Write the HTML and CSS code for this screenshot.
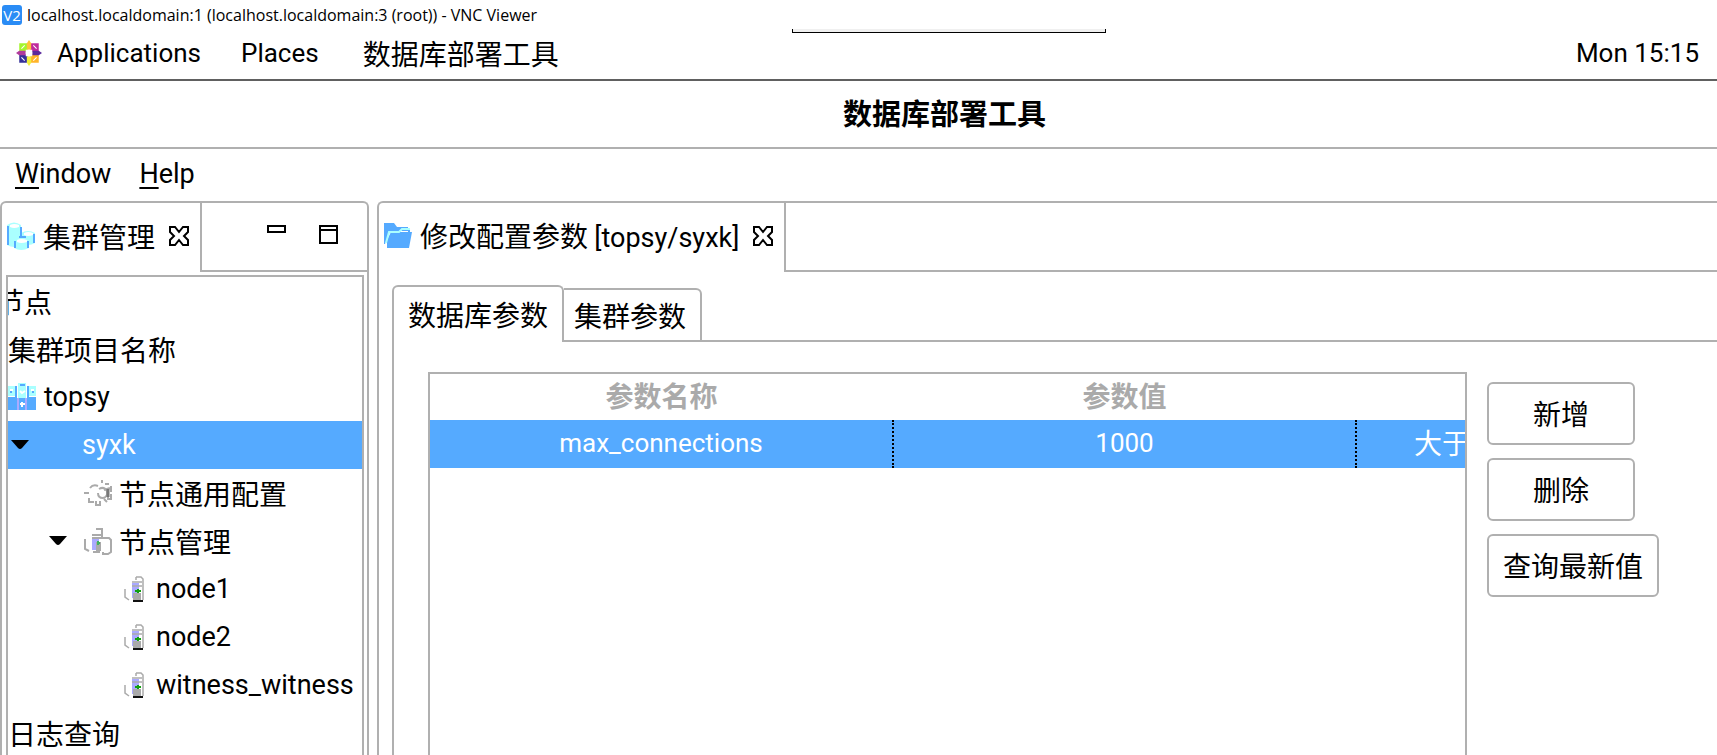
FILE: index.html
```
<!DOCTYPE html>
<html lang="zh-CN">
<head>
  <meta charset="UTF-8">
  <meta name="viewport" content="width=device-width, initial-scale=1.0">
  <title>数据库部署工具</title>
  <link rel="stylesheet" href="styles.css">
</head>
<body>

  <!-- shared icons -->
  <svg class="defs" width="0" height="0">
    <symbol id="close" viewBox="0 0 20 20">
      <path d="M1 1H6L10 6L14 1H19V6L15 10L19 14V19H14L10 14L6 19H1V14L5 10L1 6Z" fill="none" stroke="#000" stroke-width="2"/>
    </symbol>
    <symbol id="arrow" viewBox="0 0 18 10">
      <path d="M0 0H18L11 8Q9 10 7 8Z"/>
    </symbol>
    <symbol id="node" viewBox="0 0 20 26">
      <path d="M8 7H15V22H8Z" fill="#aaaaff"/>
      <path d="M9 17H17V24H9Z" fill="#aaa"/>
      <path d="M12 1H17L19 3V24M1 13V21L5 24M12 1V4M8 6H18M8 10H18" fill="none" stroke="#aaa" stroke-width="1.5"/>
      <path d="M9 25H19" stroke="#111" stroke-width="2"/>
      <path d="M14 13V17M11 15H17" stroke="#10a010" stroke-width="2"/>
    </symbol>
  </svg>

  <header class="vnc-title">
    <span class="vnc-logo">V2</span>
    <span>localhost.localdomain:1 (localhost.localdomain:3 (root)) - VNC Viewer</span>
  </header>
  <div class="vnc-handle"></div>

  <nav class="desktop-bar">
    <svg class="centos" viewBox="0 0 24 24">
      <path d="M3 3H11V11H3Z" fill="#a5f52c"/>
      <path d="M13 3H21V11H13Z" fill="#c02a9c"/>
      <path d="M3 13H11V21H3Z" fill="#35309a"/>
      <path d="M13 13H21V21H13Z" fill="#ffb429"/>
      <path d="M12 0L14 3V9H10V3Z" fill="#ffc13a"/>
      <path d="M24 12L21 14H15V10H21Z" fill="#5b2a9c"/>
      <path d="M12 24L10 21V15H14V21Z" fill="#f0f03c"/>
      <path d="M0 12L3 10H9V14H3Z" fill="#b03a9c"/>
      <path d="M9 9H15V15H9Z" fill="#fff"/>
      <path d="M5 8L8 5M16 5L19 8M5 16L8 19M16 19L19 16" stroke="#fff" stroke-width="1"/>
    </svg>
    <button class="desk-item apps latin">Applications</button>
    <button class="desk-item latin">Places</button>
    <button class="desk-item">数据库部署工具</button>
    <time class="clock latin">Mon 15:15</time>
  </nav>

  <h1 class="window-title">数据库部署工具</h1>

  <nav class="menu-bar latin">
    <button><u>W</u>indow</button>
    <button><u>H</u>elp</button>
  </nav>

  <main class="workbench">
    <section class="pane side">
      <div class="strip">
        <div class="view-tab">
          <svg class="icon" viewBox="0 0 28 28">
            <path d="M0 3Q7 -2 14 3V23Q7 27 0 23Z" fill="#aaffff"/>
            <path d="M14 11Q21 7 28 11V21Q21 25 14 21Z" fill="#aaffff"/>
            <path d="M7 18Q14 14 22 18V26Q14 30 7 26Z" fill="#aaffff"/>
            <path d="M1 4V23M14 5V15M27 12V21M8 19V26M21 19V26M12 15H19" stroke="#55aaff" stroke-width="2" fill="none"/>
            <path d="M3 3Q7 1 12 3V5Q7 7 3 5ZM17 11Q21 9 26 11V13Q21 15 17 13ZM10 18Q14 16 20 18V20Q14 22 10 20Z" fill="#fff"/>
          </svg>
          <span>集群管理</span>
          <button class="x" aria-label="Close"><svg><use href="#close"/></svg></button>
        </div>
        <div class="strip-rest">
          <button class="x" aria-label="Minimize"><svg viewBox="0 0 20 20"><path d="M1 1H18V7H1Z" fill="none" stroke="#000" stroke-width="2"/></svg></button>
          <button class="x" aria-label="Maximize"><svg viewBox="0 0 20 20"><path d="M1 1H18V18H1ZM1 5H18" fill="none" stroke="#000" stroke-width="2"/></svg></button>
        </div>
      </div>
      <ul class="tree">
        <li class="clipped">节点</li>
        <li>集群项目名称</li>
        <li class="latin">
          <svg class="icon" viewBox="0 0 28 28">
            <path d="M0 3H9V13H0ZM19 3H28V13H19ZM10 0H18V15H10Z" fill="#aaffff"/>
            <path d="M0 14H9V27H0ZM10 15H18V27H10ZM19 14H28V27H19ZM7 3H9V14H7ZM19 3H21V14H19Z" fill="#55aaff"/>
            <path d="M10 15V27M18 15V27" stroke="#aaaaff" stroke-width="2"/>
            <path d="M2 7H5M23 7H26M14 19V24M12 21H17M12 8L14 10L17 8" stroke="#fff" stroke-width="2" fill="none"/>
            <path d="M12 2H17M2 9H4M24 9H26" stroke="#55aaff" stroke-width="2"/>
          </svg>
          topsy
        </li>
        <li class="selected latin">
          <svg class="arrow"><use href="#arrow"/></svg>
          syxk
        </li>
        <li class="level-2">
          <svg class="icon" viewBox="0 0 28 28" fill="none" stroke="#aaa" stroke-width="2">
            <path d="M6 9Q9 5 14 7M18 1V4M21 5H25M27 7V13M15 10Q20 7 23 12Q24 18 19 19Q14 19 14 14M0 14H5M5 19V23H10M12 22V26H16V22M20 20L23 23M24 13V20H27V15M20 11L26 9"/>
            <path d="M24 10V18" stroke="#777" stroke-width="3"/>
          </svg>
          节点通用配置
        </li>
        <li class="level-1">
          <svg class="arrow"><use href="#arrow"/></svg>
          <svg class="icon" viewBox="0 0 28 28" fill="none" stroke="#aaa" stroke-width="2">
            <path d="M8 11H15V23H8Z" fill="#aaaaff" stroke="none"/>
            <path d="M12 15H17V24H12Z" fill="#aaa" stroke="none"/>
            <path d="M12 2H18V10M8 8H18M1 12V22L5 24M8 11H25L27 13V25L24 27H19V25M9 25H16"/>
            <path d="M14 14V18M13 16H16" stroke="#40b060"/>
          </svg>
          节点管理
        </li>
        <li class="level-3 latin"><svg class="node"><use href="#node"/></svg>node1</li>
        <li class="level-3 latin"><svg class="node"><use href="#node"/></svg>node2</li>
        <li class="level-3 latin"><svg class="node"><use href="#node"/></svg>witness_witness</li>
        <li>日志查询</li>
      </ul>
    </section>

    <section class="pane editor">
      <div class="strip">
        <div class="view-tab">
          <svg class="icon" viewBox="0 0 28 28">
            <path d="M0 1H10L13 5H24V9H6L1 22H0Z" fill="#55aaff"/>
            <path d="M3 26V18L7 10H24V7H26V10H28L25 26Z" fill="#55aaff"/>
            <path d="M2 21L5 10H15L18 7H26" fill="none" stroke="#aaffff" stroke-width="2"/>
          </svg>
          <span>修改配置参数 <span class="latin">[topsy/syxk]</span></span>
          <button class="x" aria-label="Close"><svg><use href="#close"/></svg></button>
        </div>
        <div class="strip-rest"></div>
      </div>

      <div class="folder">
        <div class="folder-tabs">
          <button class="folder-tab active">数据库参数</button>
          <button class="folder-tab">集群参数</button>
          <div class="folder-line"></div>
        </div>
        <div class="folder-body">
          <div class="table-box">
            <table>
              <thead>
                <tr><th>参数名称</th><th>参数值</th><th></th></tr>
              </thead>
              <tbody>
                <tr><td class="latin">max_connections</td><td class="latin">1000</td><td class="range">大于</td></tr>
              </tbody>
            </table>
          </div>
          <div class="actions">
            <button>新增</button>
            <button>删除</button>
            <button class="wide">查询最新值</button>
          </div>
        </div>
      </div>
    </section>
  </main>

</body>
</html>
```
FILE: styles.css
```
* {
  box-sizing: border-box;
}

body {
  margin: 0;
  height: 100vh;
  overflow: hidden;
  display: flex;
  flex-direction: column;
  background: #fff;
  color: #000;
  font-family: "Noto Sans CJK SC", sans-serif;
  font-size: 28px;
  line-height: 46px;
}

button {
  font: inherit;
  color: inherit;
  background: none;
  border: none;
  padding: 0;
  white-space: nowrap;
}

svg {
  display: block;
  flex: none;
}

.defs {
  position: absolute;
}

.latin {
  font-family: Roboto, "Noto Sans CJK SC", sans-serif;
  font-size: 27px;
}

.desktop-bar .latin,
td.latin {
  font-size: 26px;
}

/* VNC viewer frame */
.vnc-title {
  flex: none;
  display: flex;
  align-items: center;
  gap: 5px;
  height: 29px;
  padding-left: 2px;
  font-family: "Open Sans", sans-serif;
  font-size: 16px;
  line-height: 28px;
}

.vnc-logo {
  width: 20px;
  height: 20px;
  border-radius: 3px;
  background: #2a8cf5;
  color: #fff;
  font-size: 15px;
  line-height: 20px;
  text-align: center;
}

.vnc-handle {
  position: absolute;
  top: 29px;
  left: 46.1%;
  width: 314px;
  height: 4px;
  background: #f0f0f0;
  border: 1px solid #000;
  border-top: none;
}

/* GNOME panel */
.desktop-bar {
  flex: none;
  display: flex;
  align-items: center;
  height: 52px;
  padding: 0 18px 2px 16px;
  border-bottom: 2px solid #606060;
}

.centos {
  width: 26px;
  height: 26px;
  margin-right: 15px;
}

.desk-item {
  margin-right: 44px;
}

.apps {
  margin-right: 40px;
}

.clock {
  margin-left: auto;
}

.window-title {
  flex: none;
  margin: 0;
  height: 68px;
  padding-left: 172px;
  border-bottom: 2px solid #b0b0b0;
  font-size: 29px;
  line-height: 62px;
  text-align: center;
}

.menu-bar {
  flex: none;
  display: flex;
  gap: 28px;
  height: 52px;
  padding: 0 0 2px 15px;
}

.menu-bar u {
  text-decoration-thickness: 2px;
  text-underline-offset: 4px;
}

/* workbench panes */
.workbench {
  flex: 1;
  display: flex;
  gap: 8px;
  min-height: 0;
}

.pane {
  display: flex;
  flex-direction: column;
  border: 2px solid #b0b0b0;
  border-bottom: none;
  border-radius: 6px 6px 0 0;
}

.side {
  flex: none;
  width: 369px;
}

.editor {
  flex: 1;
  min-width: 0;
  border-right: none;
  border-top-right-radius: 0;
}

.strip {
  flex: none;
  display: flex;
  height: 69px;
}

.view-tab {
  display: flex;
  align-items: center;
  gap: 8px;
  padding: 0 11px 3px 5px;
  border-right: 2px solid #b0b0b0;
  white-space: nowrap;
}

.strip-rest {
  flex: 1;
  display: flex;
  justify-content: flex-end;
  gap: 32px;
  padding: 22px 28px 0 0;
  border-bottom: 2px solid #b0b0b0;
}

.icon {
  width: 28px;
  height: 28px;
}

.x,
.x svg {
  width: 20px;
  height: 20px;
}

.view-tab .x {
  margin-left: 6px;
}

/* cluster tree */
.tree {
  flex: 1;
  min-height: 0;
  margin: 3px 3px 0 4px;
  padding: 0;
  border: 2px solid #b0b0b0;
  border-bottom: none;
  list-style: none;
  overflow: hidden;
}

.tree li {
  display: flex;
  align-items: center;
  gap: 8px;
  height: 48px;
  white-space: nowrap;
}

/* first header is scrolled partly out of view */
.tree .clipped {
  margin-left: -12px;
}

.tree .selected {
  gap: 53px;
  padding-left: 3px;
  background: #55aaff;
  color: #fff;
}

.arrow {
  width: 18px;
  height: 10px;
}

.tree .level-1 {
  gap: 7px;
  padding-left: 41px;
}

.level-1 .arrow {
  margin-right: 10px;
}

.tree .level-2 {
  gap: 7px;
  padding-left: 76px;
}

.tree .level-3 {
  gap: 12px;
  padding-left: 116px;
}

.node {
  width: 20px;
  height: 26px;
}

/* parameter editor */
.folder {
  flex: 1;
  display: flex;
  flex-direction: column;
  min-height: 0;
  margin: 13px 0 0 13px;
}

.folder-tabs {
  flex: none;
  display: flex;
  align-items: flex-end;
  height: 57px;
}

.folder-tab {
  height: 54px;
  padding: 0 14px 0 10px;
  border: 2px solid #b0b0b0;
  border-left: none;
  border-top-right-radius: 6px;
}

.folder-tab.active {
  height: 57px;
  padding: 0 14px 2px;
  border-left: 2px solid #b0b0b0;
  border-bottom: none;
  border-radius: 6px 6px 0 0;
}

.folder-line {
  flex: 1;
  border-bottom: 2px solid #b0b0b0;
}

.folder-body {
  flex: 1;
  display: flex;
  gap: 20px;
  min-height: 0;
  padding: 30px 58px 0 34px;
  border-left: 2px solid #b0b0b0;
}

.table-box {
  flex: 1;
  min-width: 0;
  border: 2px solid #b0b0b0;
  border-bottom: none;
  overflow: hidden;
}

table {
  width: 1389px;
  table-layout: fixed;
  border-collapse: collapse;
}

th,
td {
  height: 48px;
  padding: 0 0 4px;
  line-height: 44px;
  text-align: center;
}

th {
  height: 46px;
  line-height: 42px;
  color: #aaa;
}

td {
  background: #55aaff;
  color: #fff;
}

td.latin {
  padding-bottom: 2px;
}

td + td {
  border-left: 2px dotted #000;
}

.range {
  padding-left: 57px;
  text-align: left;
}

.actions {
  display: flex;
  flex-direction: column;
  align-items: flex-start;
  gap: 13px;
  padding-top: 10px;
}

.actions button {
  width: 148px;
  height: 63px;
  padding-bottom: 2px;
  border: 2px solid #b0b0b0;
  border-radius: 6px;
}

.actions .wide {
  width: 172px;
}
```
